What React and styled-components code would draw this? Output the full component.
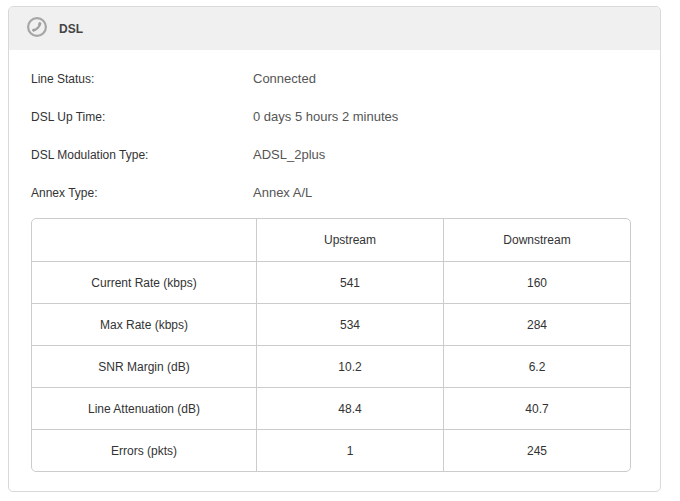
import React from "react";
import styled, { createGlobalStyle } from "styled-components";

const GlobalStyle = createGlobalStyle`
  html, body {
    margin: 0;
    padding: 0;
    background: #fff;
  }
  body {
    font-family: "Liberation Sans", Arial, sans-serif;
    font-size: 12px;
    color: #333;
  }
`;

const Page = styled.div`
  width: 680px;
  height: 501px;
  padding: 6px 19px 0 8px;
  box-sizing: border-box;
`;

const Card = styled.section`
  height: 486px;
  box-sizing: border-box;
  border: 1px solid #d9d9d9;
  border-radius: 5px;
  overflow: hidden;
`;

const CardHeader = styled.header`
  height: 43px;
  display: flex;
  align-items: center;
  gap: 12px;
  padding-left: 18px;
  background: #f0f0f0;
`;

const HeaderIcon = styled.svg`
  display: block;
  margin-bottom: 3px;
`;

const CardTitle = styled.h2`
  margin: 0;
  font-size: 12px;
  font-weight: 700;
  color: #444;
`;

const CardBody = styled.div`
  padding: 10px 29px 0 22px;
`;

const InfoList = styled.div`
  display: flex;
  flex-direction: column;
`;

const InfoRow = styled.div`
  height: 38px;
  display: grid;
  grid-template-columns: 222px 1fr;
  align-items: center;
`;

const InfoLabel = styled.span`
  font-size: 12px;
  color: #333;
`;

const InfoValue = styled.span`
  margin-bottom: 2px;
  font-size: 13px;
  color: #555;
`;

const StatsTable = styled.div`
  margin-top: 6px;
  width: 600px;
  box-sizing: border-box;
  border: 1px solid #ccc;
  border-radius: 5px;
  display: grid;
  grid-template-columns: 224px 187px 187px;
  grid-auto-rows: 42px;
`;

const StatsCell = styled.div`
  display: flex;
  align-items: center;
  justify-content: center;
  box-sizing: border-box;
  font-size: 12px;
  color: #333;
  border-left: ${(p) => (p.$first ? "none" : "1px solid #ccc")};
  border-top: ${(p) => (p.$top ? "none" : "1px solid #ccc")};
`;

function PhoneIcon() {
  return (
    <HeaderIcon width="20" height="20" viewBox="0 0 20 20" fill="none">
      <circle cx="10" cy="10" r="8.9" stroke="#a6a6a6" strokeWidth="2.2" />
      <path
        d="M12.6 6.4 C13.2 9.4 9.6 13 6.4 13.2"
        stroke="#a0a0a0"
        strokeWidth="2.2"
        strokeLinecap="round"
      />
      <path d="M11 7.4 L12.8 4.8 L14.6 6.6 L13.2 9 Z" fill="#a0a0a0" />
      <path d="M7 11.4 L4.8 13 L6.4 15 L9 13.6 Z" fill="#a0a0a0" />
    </HeaderIcon>
  );
}

const info = [
  ["Line Status:", "Connected"],
  ["DSL Up Time:", "0 days 5 hours 2 minutes"],
  ["DSL Modulation Type:", "ADSL_2plus"],
  ["Annex Type:", "Annex A/L"],
];

const stats = [
  ["", "Upstream", "Downstream"],
  ["Current Rate (kbps)", "541", "160"],
  ["Max Rate (kbps)", "534", "284"],
  ["SNR Margin (dB)", "10.2", "6.2"],
  ["Line Attenuation (dB)", "48.4", "40.7"],
  ["Errors (pkts)", "1", "245"],
];

export default function App() {
  return (
    <Page>
      <GlobalStyle />
      <Card>
        <CardHeader>
          <PhoneIcon />
          <CardTitle>DSL</CardTitle>
        </CardHeader>
        <CardBody>
          <InfoList>
            {info.map(([label, value]) => (
              <InfoRow key={label}>
                <InfoLabel>{label}</InfoLabel>
                <InfoValue>{value}</InfoValue>
              </InfoRow>
            ))}
          </InfoList>
          <StatsTable>
            {stats.flatMap((row, r) =>
              row.map((text, c) => (
                <StatsCell key={`${r}-${c}`} $first={c === 0} $top={r === 0}>
                  {text}
                </StatsCell>
              ))
            )}
          </StatsTable>
        </CardBody>
      </Card>
    </Page>
  );
}
